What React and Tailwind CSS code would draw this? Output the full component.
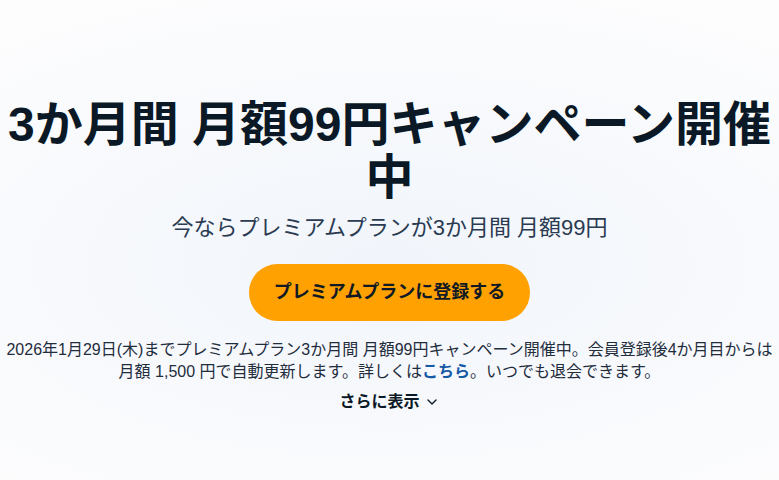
import { ChevronDown } from "lucide-react";

export default function App() {
  return (
    <div
      className="min-h-[480px] w-full bg-[radial-gradient(ellipse_80%_60%_at_50%_55%,#f1f5fb_0%,#f7f9fc_55%,#fdfdfe_100%)] text-center"
      style={{ fontFamily: '"Liberation Sans", "Noto Sans CJK JP", sans-serif' }}
    >
      <div className="flex flex-col items-center px-1 pt-[99px]">
        <h1 className="text-[48px] font-bold leading-[1.1] text-[#0b1826]">
          3か月間 月額99円キャンペーン開催中
        </h1>

        <p className="mt-[6px] text-[22px] leading-[33px] text-[#2a3b52]">
          今ならプレミアムプランが3か月間 月額99円
        </p>

        <button className="mt-[20px] h-[57px] w-[281px] rounded-full bg-[#ffa100] text-[18px] font-bold text-[#111a24]">
          プレミアムプランに登録する
        </button>

        <p className="mt-[18px] text-[16px] leading-[22px] text-[#1f2d3d]">
          2026年1月29日(木)までプレミアムプラン3か月間 月額99円キャンペーン開催中。会員登録後4か月目からは月額 1,500 円で自動更新します。詳しくは
          <a className="font-bold text-[#1459a6]">こちら</a>
          。いつでも退会できます。
        </p>

        <button className="mt-[7px] flex items-center gap-1 text-[16px] font-bold leading-[24px] text-[#0b1826]">
          さらに表示
          <ChevronDown size={16} strokeWidth={2} />
        </button>
      </div>
    </div>
  );
}
